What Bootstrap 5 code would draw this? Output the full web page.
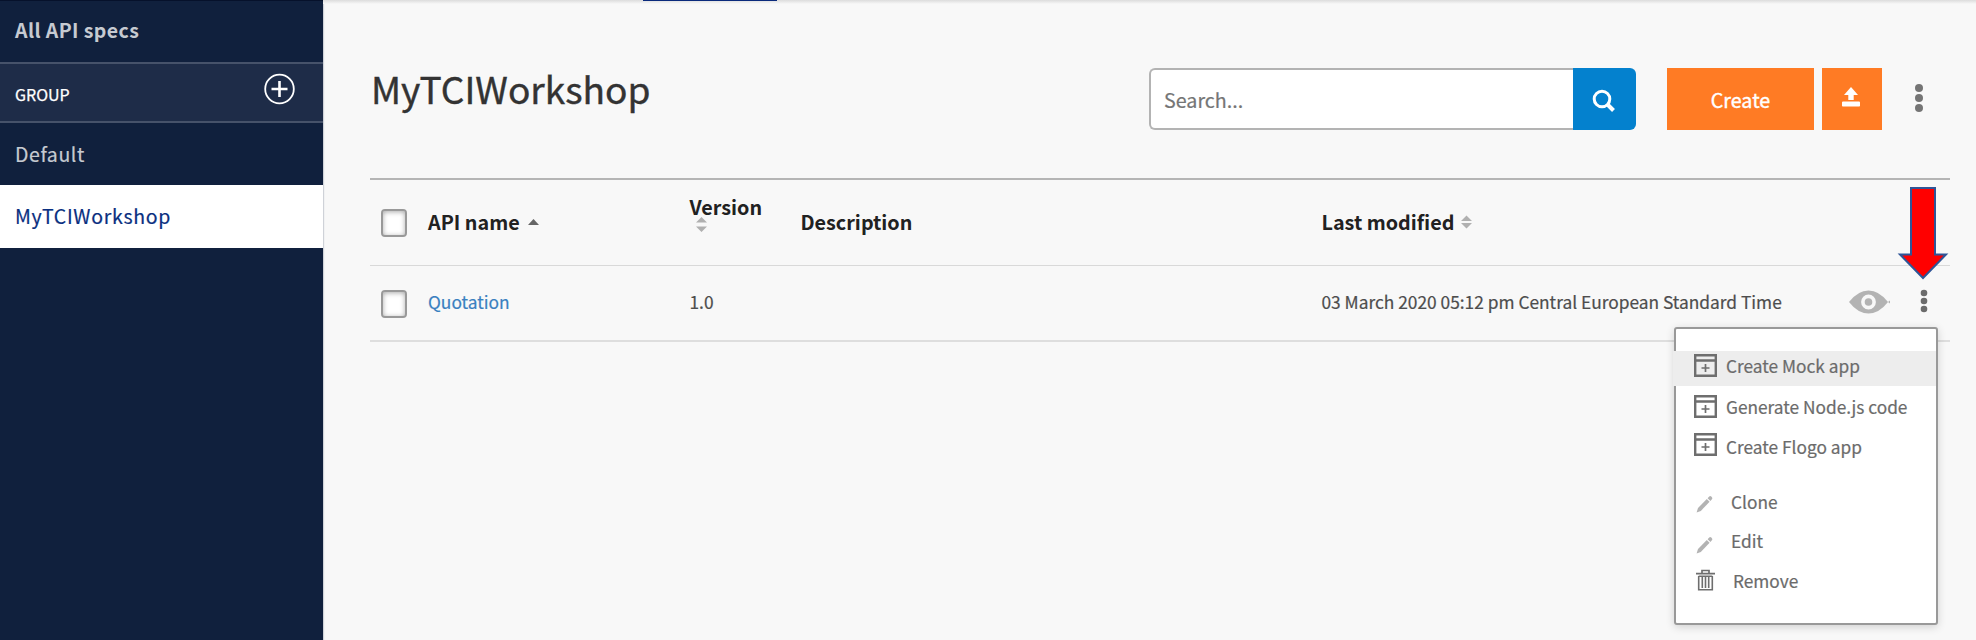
<!DOCTYPE html>
<html lang="en">
<head>
<meta charset="utf-8">
<title>API specs</title>
<link href="https://cdn.jsdelivr.net/npm/bootstrap@5.3.0/dist/css/bootstrap.min.css" rel="stylesheet">
<style>
  body { font-family: "Noto Sans CJK SC", "Open Sans", sans-serif; background: #f8f8f8; color: #4d4d4d; height: 640px; overflow: hidden; -webkit-text-stroke: .2px currentColor; }
  svg { display: block; flex: none; }

  /* sidebar */
  .side { width: 323px; background: #10203d; box-shadow: 1px 0 1px #cfd2d8; font-size: 19.5px; letter-spacing: .58px; color: #c6cad1; }
  .side-row { padding-left: 15px; box-sizing: border-box; }
  .side-all { height: 62px; padding-bottom: 4px; border-top: 1px solid #06112b; letter-spacing: .4px; -webkit-text-stroke: 0; }
  .side-group { height: 61px; padding-right: 28px; background: #1e2c48; border-top: 2px solid #46526a; border-bottom: 2px solid #46526a; color: #fff; font-size: 16px; letter-spacing: 0; -webkit-text-stroke: .25px #fff; }
  .side-group span { padding-top: 3px; }
  .side-group svg { margin-top: -8px; }
  .side-item { height: 62px; }
  .side-item.picked { height: 63px; background: #fff; color: #0a2f80; padding-bottom: 2px; letter-spacing: .7px; }

  /* content */
  .content { padding-left: 47px; padding-right: 26px; }
  .top-edge { height: 4px; margin: 0 -26px 0 -47px; padding-left: 320px; background: linear-gradient(#dcdcdc, #f8f8f8); }
  .top-edge div { width: 134px; height: 1.4px; background: #0a2a7c; }
  .head-bar { height: 174px; padding-top: 64px; }
  .page-title { font-size: 37.1px; line-height: 40px; color: #333; font-weight: 400; margin: 0; padding-left: 1px; -webkit-text-stroke: .4px #333; }
  .search-group { width: 487px; height: 62px; }
  .search-group .form-control { border: 2px solid #b3b3b3; border-radius: 6px 0 0 6px; padding: 2px 13px 0; font-size: 19.7px; border-right: 0; }
  .search-group .form-control::placeholder { color: #757575; opacity: 1; }
  .btn-search { width: 63px; background: #0481ce; border: 0; border-radius: 0 6px 6px 0; }
  .btn-orange { height: 62px; background: #ff7b24; color: #fff; border: 0; border-radius: 0; padding: 2px 0 0; font-size: 19.7px; -webkit-text-stroke: .4px #fff; }

  /* table */
  .specs { table-layout: fixed; width: 1580px; border-collapse: collapse; border-top: 2px solid #b5b5b5; font-size: 17.33px; }
  .specs th { height: 86px; padding: 0; font-size: 19.75px; line-height: 28px; color: #212121; border-bottom: 1px solid #d9d9d9; vertical-align: middle; -webkit-text-stroke: 0; }
  .specs td { height: 76px; padding: 0 0 2px; border-bottom: 2px solid #dedede; vertical-align: middle; white-space: nowrap; }
  .specs .form-check-input { display: block; width: 26px; height: 28px; margin: 2px 0 0 11px; border: 2px solid #999; border-radius: 4px; background: #fff; box-shadow: inset 0 1px 5px #aaa; }
  .specs td .form-check-input { margin-top: 4px; }
  .specs a { color: #3a80c0; text-decoration: none; }

  /* row menu */
  .row-menu { position: absolute; left: 1674px; top: 327px; width: 264px; height: 298px; padding: 22px 0 0; background: #fff; border: 2px solid #999; border-radius: 3px; box-shadow: 0 2px 8px rgba(0,0,0,.16); color: #6b6b6b; font-size: 17.3px; line-height: 28px; z-index: 2; }
  .menu-line { padding-left: 18px; height: 28px; margin-bottom: 12px; white-space: nowrap; }
  .menu-line span { padding-top: 2px; }
  .menu-line svg { margin-right: 9px; }
  .menu-line.hot { background: #ededed; height: 35px; margin: 0 0 6px -3px; padding-left: 21px; padding-bottom: 6px; }
  .menu-line.hot span { padding-top: 0; }
  .menu-line.gap-above { margin-top: 27px; }
  .pointer { position: absolute; left: 1895px; top: 184px; z-index: 3; }
</style>
</head>
<body class="d-flex">

<svg width="0" height="0" class="position-absolute">
  <symbol id="appbox" viewBox="0 0 23 23"><path d="M1.200 1.200h20.600v20.600H1.200zM1 6.500h21" fill="none" stroke="#6e6e6e" stroke-width="2.400"/><path d="M11.500 10v8M7.500 14h8" stroke="#6e6e6e" stroke-width="1.700"/></symbol>
  <symbol id="pencil" viewBox="0 0 17 18"><path d="M.6 17.400l1.400-4.400L10.800 4 13.600 6.800 4.800 15.900z" fill="#b3b3b3"/><path d="M11.600 3.300l1.600-1.700a1.500 1.500 0 0 1 2.100 0l.6.600a1.500 1.500 0 0 1 0 2.100l-1.500 1.700z" fill="#b3b3b3"/></symbol>
  <symbol id="sorter" viewBox="0 0 11 14"><path d="M0 6L5.500 .5 11 6zM0 8h11L5.500 13.500z" fill="#b0b0b0"/></symbol>
</svg>

<aside class="side flex-shrink-0 vh-100">
  <div class="side-row side-all d-flex align-items-center fw-bold">All API specs</div>
  <div class="side-row side-group d-flex align-items-center justify-content-between">
    <span>GROUP</span>
    <svg width="31" height="32" viewBox="0 0 31 32" fill="none" stroke="#fff"><circle cx="15.500" cy="16" r="14.300" stroke-width="1.800"/><path d="M15.500 8v16M7.500 16h16" stroke-width="2.600"/></svg>
  </div>
  <div class="side-row side-item d-flex align-items-center">Default</div>
  <div class="side-row side-item picked d-flex align-items-center">MyTCIWorkshop</div>
</aside>

<main class="content flex-grow-1">
  <div class="top-edge"><div></div></div>
  <header class="head-bar d-flex align-items-start">
    <h1 class="page-title me-auto">MyTCIWorkshop</h1>
    <div class="input-group search-group flex-nowrap">
      <input class="form-control" type="text" placeholder="Search...">
      <button class="btn btn-search d-flex align-items-center justify-content-center p-0" aria-label="Search">
        <svg width="24" height="24" viewBox="0 0 24 24" fill="none" stroke="#fff" style="margin:3px 2px 0 0"><circle cx="10" cy="10" r="7.800" stroke-width="3"/><path d="M15.500 15.500l6 6" stroke-width="4"/></svg>
      </button>
    </div>
    <button class="btn btn-orange" style="width:147px;margin-left:31px">Create</button>
    <button class="btn btn-orange d-flex justify-content-center" style="width:60px;margin-left:8px;padding:19px 2px 0 0" aria-label="Upload">
      <svg width="18" height="20" viewBox="0 0 18 20" fill="#fff"><path d="M9 0l7 8h-4.300v5H6.300V8H2zM1 14.500h16a1 1 0 0 1 1 1v3.200a.8.8 0 0 1-.8.800H.8a.8.8 0 0 1-.8-.8v-3.200a1 1 0 0 1 1-1z"/></svg>
    </button>
    <svg width="10" height="30" viewBox="0 0 10 30" fill="#757575" style="margin:15px 26px 0 32px"><circle cx="5" cy="5" r="4"/><circle cx="5" cy="15" r="4"/><circle cx="5" cy="25" r="4"/></svg>
  </header>

  <table class="specs">
    <colgroup><col style="width:58px"><col style="width:261.500px"><col style="width:111px"><col style="width:521px"><col></colgroup>
    <thead>
      <tr>
        <th><input class="form-check-input" type="checkbox" aria-label="Select all"></th>
        <th><div class="d-flex align-items-center">API name<svg class="ms-2" width="11" height="6" viewBox="0 0 11 6"><path d="M0 6L5.500 0 11 6z" fill="#666"/></svg></div></th>
        <th><div style="height:58px">Version<svg width="11" height="15" viewBox="0 0 11 15" style="margin-left:6.500px;margin-top:-4px"><path d="M0 5.500L5.500 0 11 5.500zM0 9.500h11L5.500 15z" fill="#b0b0b0"/></svg></div></th>
        <th>Description</th>
        <th><div class="d-flex align-items-center">Last modified<svg width="11" height="14" style="margin-left:6.500px"><use href="#sorter"/></svg></div></th>
      </tr>
    </thead>
    <tbody>
      <tr>
        <td><input class="form-check-input" type="checkbox" aria-label="Select Quotation"></td>
        <td><a href="#">Quotation</a></td>
        <td>1.0</td>
        <td></td>
        <td><div class="d-flex align-items-center">03 March 2020 05:12 pm Central European Standard Time
          <svg class="ms-auto" width="42" height="24" viewBox="0 0 42 24"><path d="M0 12Q9 .5 19.500 .5T39 12Q30 23.500 19.500 23.500T0 12z" fill="#b3b3b3"/><circle cx="19.500" cy="12" r="5.600" fill="none" stroke="#f8f8f8" stroke-width="3.600"/><path d="M39 12l2-1.500v3z" fill="#b3b3b3"/></svg>
          <svg width="8" height="24" viewBox="0 0 8 24" fill="#6b6b6b" style="margin:-2px 22px 0 29px"><circle cx="4" cy="4" r="3.300"/><circle cx="4" cy="12" r="3.300"/><circle cx="4" cy="20" r="3.300"/></svg></div></td>
      </tr>
    </tbody>
  </table>
</main>

<div class="row-menu">
  <div class="menu-line hot d-flex align-items-center"><svg width="23" height="23"><use href="#appbox"/></svg><span>Create Mock app</span></div>
  <div class="menu-line d-flex align-items-center"><svg width="23" height="23"><use href="#appbox"/></svg><span>Generate Node.js code</span></div>
  <div class="menu-line d-flex align-items-center"><svg width="23" height="23" class="mb-1"><use href="#appbox"/></svg><span>Create Flogo app</span></div>
  <div class="menu-line gap-above d-flex align-items-center"><svg width="17" height="18" style="margin:6px 18px 0 2px"><use href="#pencil"/></svg><span>Clone</span></div>
  <div class="menu-line d-flex align-items-center" style="margin-top:-1px"><svg width="17" height="18" style="margin:9px 18px 0 2px"><use href="#pencil"/></svg><span>Edit</span></div>
  <div class="menu-line d-flex align-items-center"><svg width="19" height="22" viewBox="0 0 19 22" fill="none" stroke="#6e6e6e" style="margin:-1px 18px 0 2px"><path d="M0 4.700h19M6 4V1.500h7V4" stroke-width="1.700"/><path d="M2.700 7v13.700h13.600V7M6.300 7.500v11.500M9.500 7.500v11.500M12.700 7.500v11.500M2.700 7.200h13.600" stroke-width="1.600"/></svg><span>Remove</span></div>
</div>

<svg class="pointer" width="56" height="98" viewBox="0 0 56 98"><path d="M16 4h24v66.500h11L28 94 5 70.500h11z" fill="#f00" stroke="#2f5597" stroke-width="2"/></svg>

</body>
</html>
